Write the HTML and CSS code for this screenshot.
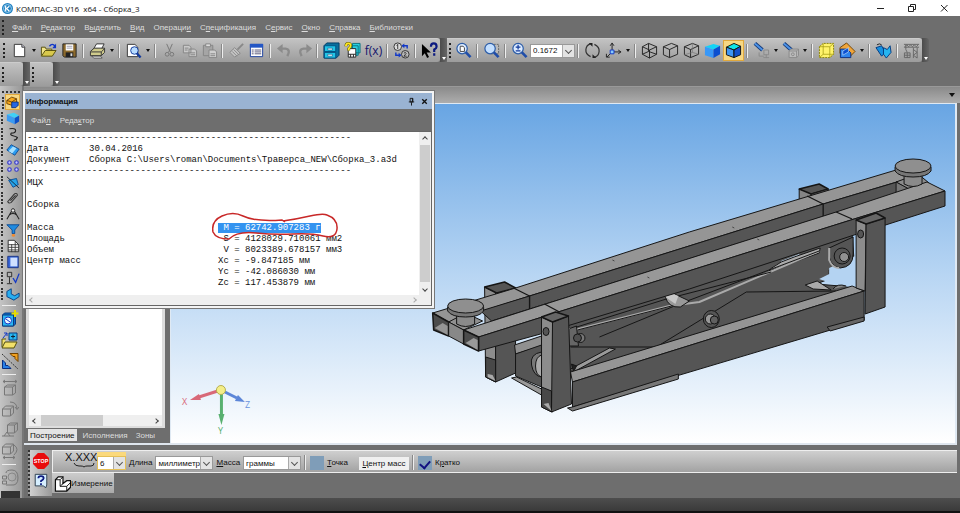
FILE: index.html
```html
<!DOCTYPE html>
<html lang="ru">
<head>
    <meta charset="UTF-8">
    <meta name="viewport" content="width=device-width, initial-scale=1.0">
    <title>КОМПАС-3D V16 x64 - Сборка_3</title>
    <link rel="stylesheet" href="styles.css">
</head>
<body>

<header class="titlebar">
    <svg class="logo" viewBox="0 0 12 12"><circle cx="6" cy="6" r="6" fill="#1f7fc0"/><circle cx="6" cy="6" r="4.3" fill="none" stroke="#9fd2f2"/><path d="M4 3v6M8 3.500L5 6l3 3" stroke="#fff" stroke-width="1.300" fill="none"/></svg>
    <h1>КОМПАС-3D V16 &nbsp;x64 - Сборка_3</h1>
    <div class="window-buttons">
        <button type="button" aria-label="Свернуть"><svg viewBox="0 0 10 10"><path d="M2 5.500h7" stroke="#222"/></svg></button>
        <button type="button" aria-label="Развернуть"><svg viewBox="0 0 10 10"><path d="M1.500 3.500h5v5h-5zM3.500 3V1.500h5v5H7" stroke="#222" fill="none"/></svg></button>
        <button type="button" aria-label="Закрыть"><svg viewBox="0 0 10 10"><path d="M2 2l6.500 6.500M8.500 2L2 8.500" stroke="#222"/></svg></button>
    </div>
</header>

<nav class="menubar">
    <span class="grip"></span>
    <a href="#"><u>Ф</u>айл</a>
    <a href="#"><u>Р</u>едактор</a>
    <a href="#">В<u>ы</u>делить</a>
    <a href="#"><u>В</u>ид</a>
    <a href="#">Операци<u>и</u></a>
    <a href="#">С<u>п</u>ецификация</a>
    <a href="#">С<u>е</u>рвис</a>
    <a href="#"><u>О</u>кно</a>
    <a href="#"><u>С</u>правка</a>
    <a href="#"><u>Б</u>иблиотеки</a>
</nav>

<div class="toolbars">
    <div class="toolbar first">
        <span class="grip"></span>
        <button type="button" aria-label="Создать"><svg viewBox="0 0 18 18"><path d="M3.500 2.500h8l3 3v10h-11z" fill="#fff" stroke="#333"/><path d="M11.500 2.500v3h3" fill="#ccd" stroke="#333"/></svg></button>
        <button type="button" class="drop" aria-label="Список"></button>
        <button type="button" aria-label="Открыть"><svg viewBox="0 0 18 18"><path d="M1.500 14.500v-9h4l1 2h6v2" fill="#f3e58a" stroke="#55500f"/><path d="M1.500 15l4-6H17l-4 6z" fill="#d9c94c" stroke="#55500f"/><path d="M10 4.500q3-4 6 0" fill="none" stroke="#1238c8" stroke-width="1.500"/><path d="M17 1.500v5h-4z" fill="#1238c8"/></svg></button>
        <button type="button" aria-label="Сохранить"><svg viewBox="0 0 18 18"><path d="M2 2h14v14H3.500L2 14.500z" fill="#8c6a2c" stroke="#222"/><path d="M5 2.500h8V9H5z" fill="#fff"/><path d="M5 11h8v5H5z" fill="#222"/><path d="M10 12h2v3h-2z" fill="#ddd"/><path d="M6 4.500h6M6 6.500h6" stroke="#99a"/></svg></button>
        <span class="sep"></span>
        <button type="button" aria-label="Печать"><svg viewBox="0 0 18 18"><path d="M5 7l3-5h8l-3 6z" fill="#fff" stroke="#333"/><path d="M1.500 10l4-3.500h11V11l-3.500 3.500H1.500z" fill="#cfcb8c" stroke="#333"/><path d="M2 10.500h11L16.500 7M13 10.500v4" fill="none" stroke="#333"/><path d="M3 15h9l2 2H5z" fill="#eee" stroke="#333" stroke-width=".7"/></svg></button>
        <button type="button" class="drop" aria-label="Список"></button>
        <span class="sep"></span>
        <button type="button" aria-label="Предварительный просмотр"><svg viewBox="0 0 18 18"><path d="M2.500 2.500h8l3 3v10h-11z" fill="#fff" stroke="#333"/><circle cx="10" cy="9" r="4" fill="#b8dcff" stroke="#123a9c"/><path d="M12.500 12l4 4.500" stroke="#123a9c" stroke-width="2.500"/></svg></button>
        <button type="button" class="drop" aria-label="Список"></button>
        <span class="sep"></span>
        <button type="button" class="off" aria-label="Вырезать"><svg viewBox="0 0 18 18"><path d="M6 2l4 9M12 2l-4 9" stroke="#777" fill="none"/><circle cx="6.500" cy="13" r="2" fill="none" stroke="#777"/><circle cx="11.500" cy="13" r="2" fill="none" stroke="#777"/></svg></button>
        <button type="button" class="off" aria-label="Копировать"><svg viewBox="0 0 18 18"><path d="M2.500 3.500h6l2 2v6h-8zM8.500 7.500h6l2 2v6h-8z" fill="#c9c9c9" stroke="#858585"/><path d="M4 6.500h4M4 8.500h3M10 11.500h5M10 13.500h5" stroke="#858585"/></svg></button>
        <button type="button" class="off" aria-label="Вставить"><svg viewBox="0 0 18 18"><path d="M2.500 3.500h10v11h-10z" fill="#a5a5a5" stroke="#858585"/><path d="M5 2h5v3H5z" fill="#ddd" stroke="#858585"/><path d="M8.500 8.500h6l2 2v6h-8z" fill="#cfcfcf" stroke="#858585"/><path d="M10 12.500h5M10 14.500h5" stroke="#858585"/></svg></button>
        <span class="sep"></span>
        <button type="button" class="off" aria-label="Копировать свойства"><svg viewBox="0 0 18 18"><path d="M16 2l-6 6" stroke="#888" stroke-width="2"/><path d="M7 6l6 6-6 4-5-5z" fill="#c4c4c4" stroke="#888"/><path d="M6 8l5 5M4.500 10l5 5" stroke="#888"/></svg></button>
        <button type="button" aria-label="Свойства"><svg viewBox="0 0 18 18"><path d="M2.500 2.500h13v13h-13z" fill="#fff" stroke="#1b3f9d"/><path d="M2 2h14v4H2z" fill="#2457c5"/><path d="M4 8.500h2M4 10.500h2M4 12.500h2M7 8.500h7M7 10.500h7M7 12.500h7" stroke="#557"/></svg></button>
        <span class="sep"></span>
        <button type="button" class="off" aria-label="Отменить"><svg viewBox="0 0 18 18"><path d="M5 7h5q6 1 2 8" fill="none" stroke="#8b8b8b" stroke-width="2.500"/><path d="M1 7l6-5v10z" fill="#8b8b8b"/></svg></button>
        <button type="button" class="off" aria-label="Повторить"><svg viewBox="0 0 18 18"><path d="M13 7H8q-6 1-2 8" fill="none" stroke="#8b8b8b" stroke-width="2.500"/><path d="M17 7l-6-5v10z" fill="#8b8b8b"/></svg></button>
        <span class="sep"></span>
        <button type="button" aria-label="Менеджер библиотек"><svg viewBox="0 0 18 18"><path d="M1 4l3-3h13v13l-3 3H1z" fill="#0a6f9d" stroke="#033c66"/><path d="M1.500 4h12v6h-12zM1.500 11h12v6h-12z" fill="#20c6e8" stroke="#044f80"/><path d="M5 6.500h5v2H5zM5 13h5v2H5z" fill="#fff" stroke="#044f80" stroke-width=".6"/></svg></button>
        <button type="button" aria-label="Показать структуру"><svg viewBox="0 0 18 18"><path d="M9 1.500h8v10H9zM7 4h8v10H7z" fill="#2ad0e0" stroke="#08727f"/><path d="M4.500 7h8v9h-8z" fill="#fff" stroke="#222"/><path d="M4.500 13h8M7 13v3M10 13v3" stroke="#222"/><path d="M2 4.500q0-3 2.500-3T7 4q0 1.500-2 3v2" fill="none" stroke="#5a5200" stroke-width="3"/><path d="M2 4.500q0-3 2.500-3T7 4q0 1.500-2 3v2" fill="none" stroke="#ffe820" stroke-width="2"/></svg></button>
        <button type="button" class="fx" aria-label="Переменные">f(x)</button>
        <span class="sep"></span>
        <button type="button" aria-label="Перенумеровать"><svg viewBox="0 0 18 18"><circle cx="5" cy="5" r="4" fill="#ddd" stroke="#333"/><circle cx="13" cy="13" r="4" fill="#bbb" stroke="#333"/><path d="M4 4l1-1.500v5M11.500 12q1.500-2 2.500 0l-2.500 3h3" fill="none" stroke="#222" stroke-width=".9"/><path d="M10 4h5v3M3 11v3h4" stroke="#1238c8" stroke-width="1.500" fill="none"/><path d="M12 1.500v5L9 4zM6 11.500v5l3-2.500z" fill="#1238c8"/></svg></button>
        <span class="sep"></span>
        <button type="button" aria-label="Что это такое?"><svg viewBox="0 0 18 18"><path d="M1 2v13l3-3 2.500 5 2-1L6 11h4.500z" fill="#000"/><path d="M10.500 5q0-3.500 3-3.500T16.500 5q0 1.500-2.500 3v2.500M14 12v2.500" fill="none" stroke="#0c1a80" stroke-width="2.300"/></svg></button>
    </div>
    <button type="button" class="overflow" aria-label="Параметры панели"></button>
    <div class="toolbar">
        <span class="grip"></span>
        <button type="button" aria-label="Показать все"><svg viewBox="0 0 18 18"><circle cx="7.500" cy="7" r="5.500" fill="#dcebff" stroke="#2c5da8" stroke-width="1.300"/><path d="M5.500 4.500h3l1.500 1.500v4H5.500z" fill="#fff" stroke="#333" stroke-width=".9"/><path d="M11.500 11l5 5" stroke="#1f4da8" stroke-width="2.800"/></svg></button>
        <span class="sep"></span>
        <button type="button" aria-label="Увеличить рамкой"><svg viewBox="0 0 18 18"><path d="M8.500 2.500h8v10h-8z" fill="#bbb" stroke="#666" stroke-dasharray="2 1"/><circle cx="7.500" cy="7" r="5.500" fill="#c3dfff" stroke="#2c5da8" stroke-width="1.300"/><path d="M11.500 11l5 5" stroke="#1f4da8" stroke-width="2.800"/></svg></button>
        <span class="sep"></span>
        <button type="button" aria-label="Приблизить"><svg viewBox="0 0 18 18"><circle cx="7.500" cy="7" r="5.500" fill="#dcebff" stroke="#2c5da8" stroke-width="1.300"/><path d="M7.500 3v5M5 5.500h5M5 9.500h5" stroke="#123a9c" stroke-width="1.300"/><path d="M11.500 11l5 5" stroke="#1f4da8" stroke-width="2.800"/></svg></button>
        <span class="combo scale"><select aria-label="Масштаб"><option>0.1672</option></select></span>
        <span class="sep"></span>
        <button type="button" aria-label="Повернуть"><svg viewBox="0 0 18 18"><path d="M7 15.500Q1.500 13 2 8t5-6M11 2.500q5.500 2.500 5 7.500t-5 6" fill="none" stroke="#333" stroke-width="1.300"/><path d="M5 1h4v4zM13 17H9v-4z" fill="#222"/></svg></button>
        <button type="button" aria-label="Ориентация"><svg viewBox="0 0 18 18"><path d="M7.500 10V2M7.500 10.500H16M7 11l-5 5" stroke="#222" fill="none"/><path d="M5.500 4l2-3 2 3M14 8.500l3 2-3 2M1.500 12.500V16H5" fill="none" stroke="#222"/><path d="M5.500 8.500h4v4h-4z" fill="#8cf" stroke="#1238c8"/></svg></button>
        <button type="button" class="drop" aria-label="Список"></button>
        <span class="sep"></span>
        <button type="button" aria-label="Каркас"><svg viewBox="0 0 18 18"><path d="M1.500 5L8 1.500 16.500 5v8L9 17l-7.500-4zM1.500 5L9 8.500 16.500 5M9 8.500V17M8 1.500V10l-6.500 3M8 10l8.500 3" fill="none" stroke="#222"/></svg></button>
        <button type="button" aria-label="Без невидимых линий"><svg viewBox="0 0 18 18"><path d="M1.500 5L10 1.500 16.500 4v9L8 16.500l-6.500-3zM1.500 5L8 8l8.500-4M8 8v8.500" fill="none" stroke="#222"/></svg></button>
        <button type="button" aria-label="Тонкие невидимые линии"><svg viewBox="0 0 18 18"><path d="M1.500 5L10 1.500 16.500 4v9L8 16.500l-6.500-3zM1.500 5L8 8l8.500-4M8 8v8.500" fill="none" stroke="#222"/><path d="M10 1.500V11l-8.500 2.500M10 11l6.500 2" fill="none" stroke="#777" stroke-width=".7"/></svg></button>
        <button type="button" aria-label="Полутоновое"><svg viewBox="0 0 18 18"><path d="M1 5l9-3 7 2-7 4z" fill="#12d4f6"/><path d="M1 5l9 3v9l-9-3z" fill="#3898f8"/><path d="M10 8l7-4v9l-7 4z" fill="#0b4fd0"/></svg></button>
        <button type="button" class="active" aria-label="Полутоновое с каркасом"><svg viewBox="0 0 18 18"><path d="M1.500 5.500l8-4 7 3-7 4z" fill="#12e4e6" stroke="#111"/><path d="M1.500 5.500l8 3v8l-8-3z" fill="#3f96f4" stroke="#111"/><path d="M9.500 8.500l7-4v9l-7 3z" fill="#1450c8" stroke="#111"/></svg></button>
        <span class="sep"></span>
        <button type="button" aria-label="Скрыть"><svg viewBox="0 0 18 18"><path d="M2 1.500l8 7" stroke="#163a78" stroke-width="4"/><path d="M2 1.500l8 7" stroke="#4d93e8" stroke-width="2"/><path d="M6.500 11v4h5M11.500 8.500h5v5h-5zM14 13.500V17M11 16.500h6" fill="none" stroke="#8a8a8a"/></svg></button>
        <button type="button" class="drop" aria-label="Список"></button>
        <button type="button" aria-label="Упрощения"><svg viewBox="0 0 18 18"><path d="M2 1.500l8 7" stroke="#163a78" stroke-width="4"/><path d="M2 1.500l8 7" stroke="#4d93e8" stroke-width="2"/><path d="M7.500 9.500l2-2h8v7l-2 2h-8zM7.500 9.500h8v7M15.500 9.500l2-2" fill="#bbb" stroke="#8a8a8a"/><circle cx="11.500" cy="13" r="1.500" fill="none" stroke="#8a8a8a"/></svg></button>
        <button type="button" class="drop" aria-label="Список"></button>
        <span class="sep"></span>
        <button type="button" aria-label="Упрощенное отображение"><svg viewBox="0 0 18 18"><path d="M1.500 5l4-3.500h11V13l-4 3.500h-11z" fill="#fff36a" stroke="#8a8200" stroke-dasharray="2 1"/><path d="M1.500 5h11v11.500M12.500 5l4-3.500M5.500 1.500V13h11M5.500 13l-4 3.500" fill="none" stroke="#a39a10" stroke-width=".8"/></svg></button>
        <button type="button" aria-label="Перестроить"><svg viewBox="0 0 18 18"><path d="M1 6l7-5 9 9-5 5-11-3z" fill="#f0a53a" stroke="#714200"/><path d="M1.500 7.500h7l4 4v5h-11z" fill="#2f83ec" stroke="#0b2f80"/><path d="M4 14V9.500L10 6v4.500z" fill="#0b4fd0" stroke="#bdf" stroke-width=".7"/></svg></button>
        <button type="button" class="drop" aria-label="Список"></button>
        <span class="sep"></span>
        <button type="button" aria-label="Сечение"><svg viewBox="0 0 18 18"><path d="M1 6l6-2 4 7-4 4z" fill="#1590e0" stroke="#063a80"/><path d="M9 6l4 2 3-4 1 7-5 6-3-4z" fill="#26b5f0" stroke="#063a80"/><path d="M2 3q3-2 5 0" stroke="#222" fill="none"/></svg></button>
        <span class="sep"></span>
        <button type="button" aria-label="Механика"><svg viewBox="0 0 18 18"><path d="M1 2.500h16M1 5.500h16M3 3v5M11 6v11M15 6v11M11 8l4 3-4 3 4 3M1.500 11.500h6v5h-6zM4.500 11.500v5M1.500 14h6M3 8l1.500 3M2 5l2-2 2 2 2-2 2 2 2-2 2 2 2-2" fill="none" stroke="#666"/></svg></button>
    </div>
    <button type="button" class="overflow" aria-label="Параметры панели"></button>
</div>

<div class="toolbars stubs">
    <div class="stub"><span class="grip"></span></div>
    <button type="button" class="overflow" aria-label="Параметры панели"></button>
    <div class="stub"><span class="grip"></span></div>
    <button type="button" class="overflow" aria-label="Параметры панели"></button>
</div>

<main class="workspace">
    <aside class="compact">
        <span class="top-grip"></span>
        <button type="button" class="active" aria-label="Редактирование сборки"><svg viewBox="0 0 16 16"><path d="M1 6l6-4 6 2v5l-6 3-6-2z" fill="#f7a81c" stroke="#5c3500"/><path d="M7 8h8v4l-3 3H7z" fill="#2767e0" stroke="#082a70"/><path d="M1 6l6 2 6-4" fill="none" stroke="#5c3500"/></svg></button>
        <button type="button" aria-label="Вспомогательная геометрия"><svg viewBox="0 0 16 16"><path d="M1 4l8-2 6 3-5 3z" fill="#3fd0f6"/><path d="M1 4l9 4v7l-9-4z" fill="#3a9bf2"/><path d="M10 8l5-3v7l-5 3z" fill="#0b50c8"/></svg></button>
        <button type="button" aria-label="Пространственные кривые"><svg viewBox="0 0 16 16"><path d="M4 2q7-1 7 2t-5 3q-2 2 2 3t5 2q-1 3-4 3" fill="none" stroke="#222" stroke-width="1.300"/></svg></button>
        <button type="button" aria-label="Поверхности"><svg viewBox="0 0 16 16"><path d="M1 8l5-6 9 5-5 7z" fill="#2a9cf0" stroke="#0a4790"/><path d="M3 9l5-5 4 2-5 6z" fill="#a6e0ff"/></svg></button>
        <button type="button" aria-label="Массивы"><svg viewBox="0 0 16 16"><g fill="#c7c9ff" stroke="#3338c8" stroke-width="1.300"><circle cx="4" cy="4" r="2"/><circle cx="12" cy="4" r="2"/><circle cx="4" cy="12" r="2"/><circle cx="12" cy="12" r="2"/></g></svg></button>
        <button type="button" aria-label="Вспомогательные элементы"><svg viewBox="0 0 16 16"><path d="M3 6l9-2 2 7-6 3z" fill="#25a4ea" stroke="#0a4790"/><path d="M1 2l14 13" stroke="#123"/></svg></button>
        <button type="button" aria-label="Сопряжения"><svg viewBox="0 0 16 16"><path d="M3 11l7-8q3-1 3 2l-7 8q-3 2-4-1l7-8M5 11l6-6" fill="none" stroke="#333" stroke-width="1.200"/></svg></button>
        <button type="button" aria-label="Измерения"><svg viewBox="0 0 16 16"><path d="M8 2L1 14M8 2l7 12M4 9q4-3 8 0" fill="none" stroke="#222" stroke-width="1.200"/><circle cx="8" cy="4" r="2" fill="#eee" stroke="#222"/></svg></button>
        <button type="button" aria-label="Фильтры"><svg viewBox="0 0 16 16"><path d="M1 2h14l-5 6v4H7V8z" fill="#1f8be0" stroke="#0a4790"/><circle cx="8.500" cy="14" r="1.800" fill="#f08a30"/></svg></button>
        <button type="button" aria-label="Спецификация"><svg viewBox="0 0 16 16"><path d="M2.500 1.500h7l5 5v8h-12z" fill="#fff" stroke="#222"/><path d="M2.500 6.500h12M2.500 9.500h12M2.500 12.500h12M6.500 6v9M10.500 2v13" stroke="#333" fill="none"/></svg></button>
        <button type="button" aria-label="Отчеты"><svg viewBox="0 0 16 16"><path d="M2 1.500h12v13H2z" fill="#3866d8" stroke="#162f80"/><path d="M5 3h8v10H5z" fill="#cfe0ff"/></svg></button>
        <button type="button" aria-label="Элементы оформления"><svg viewBox="0 0 16 16"><path d="M1.500 1.500h5v5h-5zM4 7v7M1 14.500h6" fill="none" stroke="#222"/><path d="M8 8l3 5 4-10" fill="none" stroke="#1238c8" stroke-width="1.500"/></svg></button>
        <button type="button" aria-label="Листовое тело"><svg viewBox="0 0 16 16"><path d="M1 5l5-3v6l4 2 5-3v4l-6 4-8-4z" fill="#28aef0" stroke="#083c80"/></svg></button>
        <hr>
        <button type="button" class="big" aria-label="Добавить из файла"><svg viewBox="0 0 18 18"><path d="M1.500 5l2-2h11v11l-2 2h-11z" fill="#0b6fd0" stroke="#083c80"/><path d="M1.500 5h11v11h-11z" fill="#28b6f2" stroke="#083c80"/><circle cx="7" cy="10.500" r="3.500" fill="#eaf6ff" stroke="#1238c8"/><path d="M5 9l4 3" stroke="#1238c8"/><path d="M14 0v7M10.500 3.500h7" stroke="#e8dd00" stroke-width="2"/></svg></button>
        <button type="button" class="big" aria-label="Открыть компонент"><svg viewBox="0 0 18 18"><path d="M8 2h8v7H8z" fill="#28b6f2" stroke="#083c80"/><path d="M12 3.500v4M10 5.500h4" stroke="#123"/><path d="M1 17l3-6h12l-3 6zM1 16V8h4" fill="#f2e06a" stroke="#55500f"/><path d="M2 7l4-5M6 5V2H3" stroke="#1238c8" fill="none"/></svg></button>
        <button type="button" class="big" aria-label="Зеркальное отражение"><svg viewBox="0 0 18 18"><path d="M1 2l16 15" stroke="#333" stroke-dasharray="2 1"/><path d="M9 1.500h8v8l-3-3v-2h-2z" fill="#f0a020" stroke="#714200"/><path d="M1.500 8v8.500H10l-3-3H4.500V11z" fill="#2880e8" stroke="#0b2f80"/></svg></button>
        <hr>
        <button type="button" class="big" aria-label="Переместить компонент"><svg viewBox="0 0 18 18"><path d="M2 2.500h14M4 1L2 2.500 4 4M14 1l2 1.500L14 4M3.500 8l3-2h8v8l-3 2h-8zM3.500 8h8v8M11.500 8l3-2" fill="none" stroke="#777"/></svg></button>
        <button type="button" class="big" aria-label="Повернуть компонент"><svg viewBox="0 0 18 18"><path d="M1.500 9l3-3h8v7l-3 3h-8zM1.500 9h8v7M9.500 9l3-3M9 2q7 0 7 7M14 7l2 2.500L18 7" fill="none" stroke="#777"/></svg></button>
        <button type="button" class="big" aria-label="Разместить компонент"><svg viewBox="0 0 18 18"><path d="M6.500 4l3-2h7v7l-3 3h-7zM6.500 4h7v8M13.500 4l3-2M1 15h12M3 15l3-4 3 4" fill="none" stroke="#777"/></svg></button>
        <button type="button" class="big" aria-label="Вращение"><svg viewBox="0 0 18 18"><path d="M1.500 5l3-3h8v7l-3 3h-8zM1.500 5h8v7M9.500 5l3-3M13 3q6 4 0 10M2 15.500h12M4 14l-2 1.500L4 17M12 14l2 1.500-2 1.500" fill="none" stroke="#777"/></svg></button>
        <hr>
        <button type="button" class="big" aria-label="Создать объект"><svg viewBox="0 0 18 18"><path d="M1.500 7h4v3h-4zM1.500 12h4v3h-4zM5 4q0-3 6-3t6 8-7 7H5" fill="none" stroke="#777"/><circle cx="11" cy="8" r="4" fill="none" stroke="#888"/></svg></button>
        <span class="bottom-corner"></span>
    </aside>

    <div class="content">
        <div class="tabstrip"><button type="button" class="drop" aria-label="Список окон"></button></div>
        <div class="panes">
            <section class="tree">
                <div class="tree-list">
                    <div class="hscroll"><span class="chev left"></span><span class="thumb"></span><span class="chev right"></span></div>
                </div>
                <div class="tabs">
                    <button type="button" class="current">Построение</button>
                    <button type="button">Исполнения</button>
                    <button type="button">Зоны</button>
                </div>
            </section>
            <section class="view">
                <svg viewBox="171 104 785 339" preserveAspectRatio="none">
                    <g stroke="#151515" stroke-width="1" stroke-linejoin="round">
                        <!-- rear posts -->
                        <path d="M485 287l11 5v90l-10-5z" fill="#8c8c8c"/>
                        <path d="M496 292l20-4v85l-20 9z" fill="#555"/>
                        <path d="M485 287l20-5 11 6-19 5z" fill="#555" stroke-width="1.500"/>
                        <path d="M486 357l10 3v22l-10-5z" fill="#484848"/>
                        <path d="M488 374l5 1 3 6-8-4z" fill="#aaa" stroke="none"/>
                        <path d="M800 189l12 4v8l-12-1z" fill="#858585"/>
                        <path d="M800 189l20-5 9 5-17 5z" fill="#555" stroke-width="1.500"/>
                        <path d="M812 194l17-5v8l-17 4z" fill="#555"/>
                        <!-- rear beam -->
                        <path d="M433 313l83-25 174-56 207-62 14 8-87 26-294 92-81 26z" fill="#959595"/>
                        <path d="M530 296l294-92 74-22 1 14-64 17-289 91-16 5z" fill="#555"/>
                        <path d="M481 311l49-15v13l-38 12z" fill="#555"/>
                        <path d="M433 313l16 9v14l-15-6z" fill="#4b4b4b" stroke-width="1.500"/>
                        <path d="M435 328l8-5 5 3v9z" fill="#959595" stroke="none"/>
                        <path d="M449 322l17-9 17 8-19 9z" fill="#909090"/>
                        <path d="M449 322l15 8v14l-15-8z" fill="#888"/>
                        <path d="M514 288l16 8v13M808 196l16 8v12" fill="none" stroke-width="1.300"/>
                        <path d="M897 182l22-8 11 9-19 7z" fill="#8b8b8b"/>
                        <path d="M897 182l13 7-13 4z" fill="#777"/>
                        <!-- lower rear beam -->
                        <path d="M515 345l27-9v10l-26 8z" fill="#909090"/>
                        <path d="M516 354l26-9v42l-26-11z" fill="#555"/>
                        <path d="M512 378l5-1 25 12v6z" fill="#999"/>
                        <path d="M542 352q-12 2-10 13t10 12" fill="#777"/>
                        <path d="M542 355q-6 2-6 11t6 11" fill="#aaa"/>
                        <!-- levers and web -->
                        <path d="M569 323l284-88 2 26-25 9v9l-13 5 36 3-283 87z" fill="#555"/>
                        <path d="M820 279l10-5v-6l26-12 1 32-20-3z" fill="#b4d3f2" stroke="none"/>
                        <path d="M782 261l18-7 1 4-20 6z" fill="#bfdaf4" stroke="none"/>
                        <path d="M771 269q10-8 24-12l26-9-1 5-50 18z" fill="#aaa"/>
                        <path d="M575 330l95-24 30-4 120-51" fill="none" stroke="#aaa" stroke-width="2"/>
                        <path d="M574 328l93-29 105-27M578 330l102-26 140-53M571 347h86l90-55 90-1M600 337l80-33" fill="none"/>
                        <path d="M666 297l5-5 19 9-9 6q-12 1-15-10z" fill="#999"/>
                        <path d="M666 297q2-5 6-4l7 3-3 8z" fill="#c7c7c7" stroke="none"/>
                        <path d="M571 369l39-21 6 1-42 23z" fill="#9a9a9a"/>
                        <path d="M572 364l5 2-3 6z" fill="#222"/>
                        <path d="M806 285l12-4 14 9-18-1z" fill="#aaa"/>
                        <path d="M834 289q4-6 13-3" fill="#888"/>
                        <path d="M569 329q-7 10 1 17h9l-2-20z" fill="#666"/>
                        <path d="M570 328q-7 9 0 18" fill="none" stroke="#bbb"/>
                        <circle cx="581" cy="338" r="4.500" fill="#777"/>
                        <circle cx="578" cy="338" r="4" fill="#505050"/>
                        <!-- lower front beam -->
                        <path d="M571 372l282-86 12 5-292 91z" fill="#959595"/>
                        <path d="M573 382l292-91v29L573 407z" fill="#555"/>
                        <path d="M568 408l5-1 106-33v5l-106 32z" fill="#777"/>
                        <path d="M828 327l37-10v4l-34 10z" fill="#666"/>
                        <!-- front beam -->
                        <path d="M464 330l82-26 291-92 91-30 18 9-91 28-376 118z" fill="#989898"/>
                        <path d="M479 337l376-118 91-28v15l-91 29-165 54-149 45-62 17z" fill="#555"/>
                        <path d="M464 330l15 7v14l-15-7z" fill="#4b4b4b" stroke-width="1.500"/>
                        <path d="M466 343l8-5 4 2v10z" fill="#999" stroke="none"/>
                        <path d="M545 304l15 8M837 212l16 7" fill="none" stroke-width="1.300"/>
                        <!-- pins -->
                        <path d="M830 248q-2 18 11 20 13-1 13-14v-17z" fill="#555"/>
                        <path d="M830 248v12q3 8 10 8" fill="none" stroke="#aaa" stroke-width="2"/>
                        <circle cx="843" cy="256" r="8" fill="#555"/>
                        <circle cx="845" cy="257" r="4.500" fill="#909090"/>
                        <ellipse cx="712" cy="319" rx="8" ry="8.500" fill="#555"/>
                        <circle cx="711" cy="319" r="5" fill="#999"/>
                        <circle cx="715" cy="320" r="4" fill="#606060"/>
                        <path d="M613 260l2 1M648 277l2 1M733 227l2 1M758 239l2 1" stroke="#444"/>
                        <!-- front posts -->
                        <path d="M542 317l11 5v90l-11-5z" fill="#8c8c8c"/>
                        <path d="M553 322l16-6 3 88-20 8z" fill="#555"/>
                        <path d="M542 317l14-5 13 4-16 6z" fill="#666" stroke-width="1.500"/>
                        <ellipse cx="546.500" cy="331.500" rx="3" ry="4" fill="#555"/>
                        <path d="M542 387l10 4v21l-10-5z" fill="#484848"/>
                        <path d="M544 404l5-1 3 8z" fill="#aaa" stroke="none"/>
                        <path d="M857 220l10 4-1 67-9-3z" fill="#8c8c8c"/>
                        <path d="M867 224l19-6v89l-20 7z" fill="#555"/>
                        <path d="M857 220l20-7 9 5-19 6z" fill="#666" stroke-width="1.500"/>
                        <ellipse cx="861.500" cy="234" rx="3" ry="4" fill="#555"/>
                        <!-- support pads -->
                        <path d="M457 312v12q9 5 18 0v-12z" fill="#8a8a8a"/>
                        <path d="M448 307v4q4 6 18 6t18-6v-4z" fill="#777"/>
                        <ellipse cx="466" cy="306" rx="18" ry="7" fill="#8f8f8f"/>
                        <path d="M905 173v11q9 5 18 0v-11z" fill="#8a8a8a"/>
                        <path d="M896 167v4q4 6 18 6t18-6v-4z" fill="#777"/>
                        <ellipse cx="914" cy="166" rx="18" ry="7" fill="#8f8f8f"/>
                    </g>
                    <!-- axes -->
                    <path d="M221 390l-22 7" stroke="#d86878" stroke-width="3"/>
                    <path d="M190 400l9-6 2 6z" fill="#d86878"/>
                    <path d="M221 390l16 8" stroke="#5c86d8" stroke-width="3"/>
                    <path d="M245 402l-10-1 3-6z" fill="#5c86d8"/>
                    <path d="M221.500 390v26" stroke="#58b070" stroke-width="3"/>
                    <path d="M221.500 425l-3-11h6z" fill="#58b070"/>
                    <circle cx="221" cy="390" r="4.500" fill="#f4ee88" stroke="#b5ae50"/>
                    <text x="182" y="405" class="axis" fill="#d86878">X</text>
                    <text x="245" y="408" class="axis" fill="#6a94dd">Z</text>
                    <text x="218" y="434" class="axis" fill="#58b070">Y</text>
                </svg>
            </section>
        </div>

        <section class="props">
            <div class="props-side">
                <button type="button" class="stop" aria-label="Прервать команду"><svg viewBox="0 0 18 18"><path d="M5.500 0h7L18 5.500v7L12.500 18h-7L0 12.500v-7z" fill="#e80c0c"/><text x="9" y="11" text-anchor="middle" class="stop-text">STOP</text></svg></button>
                <button type="button" aria-label="Справка"><svg viewBox="0 0 18 18"><path d="M2.500 1.500h13v12l-1 3-3-2h-9z" fill="#d6efff" stroke="#234"/><path d="M6 6q0-2.500 3-2.500T12 6q0 1.500-3 3v1M9 11.500v2" fill="none" stroke="#0c1a80" stroke-width="2"/></svg></button>
            </div>
            <div class="props-main">
                <div class="props-row">
                    <span class="digits"><span>X.XXX</span><svg viewBox="0 0 24 5"><path d="M2 0q1 3 5 3h2q2 0 3 1 1-1 3-1h4q3 0 3-3" fill="none" stroke="#222"/></svg></span>
                    <span class="combo precision"><select aria-label="Точность"><option>6</option></select></span>
                    <label for="length"><u>Д</u>лина</label>
                    <span class="combo length"><select id="length"><option>миллиметры</option></select></span>
                    <label for="mass"><u>М</u>асса</label>
                    <span class="combo mass"><select id="mass"><option>граммы</option></select></span>
                    <span class="sep"></span>
                    <input type="checkbox" id="point"><label for="point"><u>Т</u>очка</label>
                    <button type="button" class="center-mass"><u>Ц</u>ентр масс</button>
                    <span class="sep"></span>
                    <input type="checkbox" id="brief" checked><label for="brief">К<u>р</u>атко</label>
                </div>
                <button type="button" class="measure"><svg viewBox="0 0 18 18"><path d="M1.500 5l3-3h5v7l4-3h4v7l-4 4h-12z" fill="#fff" stroke="#111" stroke-width="1.300"/><path d="M1.500 5h5v7h7v5M6.500 5l3-3M13.500 12l4-4M6.500 12l3-3" fill="none" stroke="#111"/></svg>Измерение</button>
            </div>
        </section>
    </div>

    <section class="dialog">
        <header>
            <h2>Информация</h2>
            <button type="button" aria-label="Закрепить"><svg viewBox="0 0 10 10"><path d="M3.500 1.500h3v4h-3zM2 5.500h6M5 6v3.500M6 1.500v4" fill="none" stroke="#111"/></svg></button>
            <button type="button" aria-label="Закрыть"><svg viewBox="0 0 10 10"><path d="M2.500 2.500l5 5M7.500 2.500l-5 5" stroke="#111" stroke-width="1.500"/></svg></button>
        </header>
        <nav><a href="#">Фай<u>л</u></a><a href="#">Реда<u>к</u>тор</a></nav>
        <div class="report-wrap">
            <div class="report">
                <div class="rule">------------------------------------------------------------</div>
                <div class="line"><span>Дата</span><span>30.04.2016</span></div>
                <div class="line"><span>Документ</span><span>Сборка C:\Users\roman\Documents\Траверса_NEW\Сборка_3.a3d</span></div>
                <div class="rule">------------------------------------------------------------</div>
                <div class="block">МЦХ</div>
                <div class="block">Сборка</div>
                <div class="values">
                    <span>Масса</span><span><mark> M = 62742.907283 г</mark></span>
                    <span>Площадь</span><span> S = 4128029.710061 мм2</span>
                    <span>Объем</span><span> V = 8023389.678157 мм3</span>
                    <span>Центр масс</span><span>Xc = -9.847185 мм</span>
                    <span></span><span>Yc = -42.086030 мм</span>
                    <span></span><span>Zc = 117.453879 мм</span>
                </div>
                <svg class="pen" viewBox="0 0 130 30"><path d="M71 9Q85 7 98 4t17-1q11 4 10 14t-14 7q-12-3-30-2T44 21 17 27Q4 27 1 20-1 9 10 4T31 4Q43 10 70 8l3 2" fill="none" stroke="#c82828" stroke-width="1.500"/></svg>
            </div>
            <div class="vscroll"><span class="chev up"></span><span class="thumb"></span><span class="chev down"></span></div>
        </div>
        <div class="hscroll"><span class="chev left"></span><span class="chev right"></span></div>
    </section>
</main>

<footer class="taskbar"></footer>

</body>
</html>
```

FILE: styles.css
```css
* {
    box-sizing: border-box;
}
body {
    margin: 0;
    height: 100vh;
    min-height: 500px;
    display: flex;
    flex-direction: column;
    background: #6e6e6e;
    font-family: "Liberation Sans", Arial, sans-serif;
    font-size: 8px;
    color: #111;
    overflow: hidden;
}
button, select, input {
    font: inherit;
    color: inherit;
    margin: 0;
}
button {
    padding: 0;
    border: none;
    background: none;
    display: flex;
    align-items: center;
    justify-content: center;
}
a {
    color: inherit;
    text-decoration: none;
}
svg {
    display: block;
}
.titlebar {
    flex: none;
    height: 16px;
    background: #fff;
    display: flex;
    align-items: center;
    padding-left: 2px;
}
.logo {
    width: 11px;
    height: 11px;
    margin-right: 3px;
}
.titlebar h1 {
    margin: 0;
    font: 8px "Open Sans", sans-serif;
}
.window-buttons {
    margin-left: auto;
    display: flex;
}
.window-buttons button {
    width: 32px;
    height: 14px;
}
.window-buttons svg {
    width: 10px;
    height: 10px;
}
.grip {
    flex: none;
    width: 6px;
    height: 15px;
    border-left: 2px dotted #222;
    margin-left: 2px;
    margin-right: -2px;
}
.menubar {
    flex: none;
    height: 22px;
    display: flex;
    align-items: center;
    gap: 9px;
    color: #ddd;
}
.menubar .grip {
    margin-right: -5px;
}
.toolbars {
    flex: none;
    height: 24px;
    display: flex;
}
.toolbar, .stub {
    display: flex;
    align-items: center;
    background: linear-gradient(#c2c2c2, #9c9c9c);
    border-top: 1px solid #ccc;
    border-radius: 0 3px 3px 0;
}
.toolbar.first {
    padding-left: 3px;
}
.first .grip {
    margin-left: 0;
    margin-right: 0;
}
.toolbar button {
    width: 21px;
    height: 21px;
}
.toolbar button.off {
    width: 20px;
}
.toolbar svg {
    width: 17px;
    height: 17px;
}
.toolbar button.active, .compact button.active {
    background: #f7d884;
    border: 1px solid #e0a83c;
}
.toolbar button.fx {
    font: 12px "Open Sans", sans-serif;
    color: #15156c;
}
.toolbar button.drop {
    width: 8px;
}
.drop::after {
    content: "";
    border: 2px solid transparent;
    border-top: 3px solid #111;
    border-bottom: none;
}
.sep {
    flex: none;
    width: 1px;
    height: 14px;
    margin: 0 3px;
    background: #eee;
    box-shadow: -1px 0 #888;
}
.overflow {
    width: 7px;
    background: linear-gradient(to right, #4c4c4c, #666);
    border-radius: 0 3px 3px 0;
    align-items: flex-end;
    padding-bottom: 2px;
}
.overflow::after {
    content: "";
    border: 2px solid transparent;
    border-top: 3px solid #fff;
    border-bottom: none;
}
.stub {
    width: 23px;
}
.combo {
    position: relative;
    display: block;
    background: #fff;
    border: 1px solid #999;
    height: 14px;
}
.combo select {
    appearance: none;
    width: 100%;
    height: 100%;
    padding: 0 11px 0 2px;
    border: none;
    background: none;
    display: block;
}
.combo::before {
    content: "";
    position: absolute;
    right: 0;
    top: 0;
    bottom: 0;
    width: 11px;
    background: #e3e3e3;
    border-left: 1px solid #aaa;
    pointer-events: none;
}
.combo::after {
    content: "";
    position: absolute;
    right: 3px;
    top: 3px;
    width: 4px;
    height: 4px;
    border: solid #555;
    border-width: 0 1px 1px 0;
    transform: rotate(45deg);
    pointer-events: none;
}
.scale {
    width: 45px;
}
.workspace {
    position: relative;
    flex: 1;
    min-height: 0;
    display: flex;
}
.compact {
    flex: none;
    width: 24px;
    padding: 0 2px 0 1px;
    background: linear-gradient(to right, #c4c4c4, #999);
    border-right: 2px solid #777;
    display: flex;
    flex-direction: column;
    align-items: flex-end;
}
.top-grip {
    width: 18px;
    height: 7px;
    border-bottom: 2px dotted #333;
    margin-bottom: 1px;
}
.compact button {
    flex: none;
    position: relative;
    width: 15px;
    height: 16px;
}
.compact button::before {
    content: "";
    position: absolute;
    left: -4px;
    top: 2px;
    height: 12px;
    border-left: 2px dotted #333;
}
.compact button svg {
    width: 14px;
    height: 14px;
}
.compact button.big {
    width: 21px;
    height: 21px;
}
.compact button.big::before {
    display: none;
}
.compact button.big svg {
    width: 18px;
    height: 18px;
}
.compact hr {
    width: 14px;
    height: 1px;
    border: none;
    background: #eee;
    margin: 3px 4px 2px;
}
.bottom-corner {
    margin-top: auto;
    align-self: stretch;
    height: 7px;
    background: #333;
}
.content {
    flex: 1;
    min-width: 0;
    display: flex;
    flex-direction: column;
    padding-right: 3px;
}
.tabstrip {
    flex: none;
    height: 17px;
    margin-right: -3px;
    padding-right: 5px;
    background: linear-gradient(#8a8a8a, #adadad);
    border-top: 1px solid #999;
    display: flex;
    justify-content: flex-end;
}
.tabstrip .drop::after {
    border-width: 3px 3px 0;
    border-top-width: 4px;
}
.panes {
    flex: 1;
    min-height: 0;
    display: flex;
    border-bottom: 2px solid #dfe6ee;
}
.tree {
    flex: none;
    width: 146px;
    padding: 0 5px 0 2px;
    background: #6e6e6e;
    display: flex;
    flex-direction: column;
}
.tree-list {
    flex: 1;
    background: #fff;
    border: 1px solid #ddd;
    border-width: 0 3px 2px 3px;
    display: flex;
    flex-direction: column;
    justify-content: flex-end;
}
.hscroll {
    flex: none;
    height: 11px;
    background: #efefef;
    display: flex;
    align-items: center;
}
.chev {
    flex: none;
    width: 4px;
    height: 4px;
    border: solid #444;
    border-width: 1px 0 0 1px;
    margin: 0 4px;
}
.chev.left {
    transform: rotate(-45deg);
}
.chev.right {
    transform: rotate(135deg);
    margin-left: auto;
}
.chev.up {
    transform: rotate(45deg);
}
.chev.down {
    transform: rotate(225deg);
}
.tree .thumb {
    width: 62px;
    height: 11px;
    background: #cdcdcd;
}
.tabs {
    flex: none;
    display: flex;
    gap: 4px;
    padding: 1px 2px 2px;
    color: #ddd;
}
.tabs button {
    height: 12px;
    padding: 0 2px;
}
.tabs .current {
    background: #e4e4e4;
    color: #111;
}
.view {
    flex: 1;
    min-width: 0;
    background: linear-gradient(#68a5e3, #b7d5f3 50%, #fff);
    border: 1px solid #dfe9f3;
    border-width: 1px 2px 0 1px;
}
.view svg {
    width: 100%;
    height: 100%;
}
.axis {
    font: 9px "Open Sans", sans-serif;
}
.props {
    flex: none;
    height: 53px;
    display: flex;
    padding: 5px 0 2px 4px;
}
.props-side {
    flex: none;
    width: 24px;
    background: linear-gradient(to right, #d0d0d0, #999);
    border-left: 2px dotted #333;
    display: flex;
    flex-direction: column;
    align-items: center;
    gap: 4px;
    padding-top: 3px;
}
.props-side svg {
    width: 16px;
    height: 16px;
}
.stop-text {
    font: bold 6px "Liberation Sans", sans-serif;
    fill: #fff;
}
.props-main {
    flex: 1;
    min-width: 0;
}
.props-row {
    height: 23px;
    display: flex;
    align-items: flex-end;
    padding: 0 0 2px 12px;
    background: linear-gradient(#cfcfcf, #a2a2a2);
    border: 1px solid #eee;
    border-right: none;
}
.props-row label {
    height: 14px;
    line-height: 14px;
    margin: 0 3px;
}
.digits {
    width: 32px;
    height: 18px;
    font-size: 11px;
    line-height: 11px;
}
.digits svg {
    width: 24px;
    height: 5px;
    margin-left: 7px;
}
.precision {
    width: 29px;
    border-color: #e4bf57;
    box-shadow: 0 -4px #fbd97c;
}
.length {
    width: 58px;
}
.mass {
    width: 58px;
}
.props-row .sep {
    height: 15px;
    margin: 0 4px;
}
.props-row input {
    appearance: none;
    width: 14px;
    height: 14px;
    background: #7f9db8;
    display: flex;
    align-items: center;
    justify-content: center;
}
.props-row input:checked::after {
    content: "";
    width: 8px;
    height: 5px;
    border: solid #101080;
    border-width: 0 0 2px 2px;
    transform: rotate(-50deg);
}
.center-mass {
    width: 50px;
    height: 13px;
    margin: 0 0 0 8px;
    background: #f0f0f0;
}
.measure {
    width: 62px;
    height: 20px;
    justify-content: flex-start;
    padding-left: 2px;
    background: linear-gradient(#ccc, #aaa);
}
.measure svg {
    flex: none;
    width: 17px;
    height: 17px;
}
.dialog {
    position: absolute;
    left: 22px;
    top: 4px;
    width: 413px;
    height: 219px;
    padding: 2px;
    background: #f4f4f4;
    border: 1px solid #777;
    display: flex;
    flex-direction: column;
}
.dialog header {
    flex: none;
    height: 16px;
    padding: 0 1px;
    background: #9ab3d2;
    display: flex;
    align-items: center;
}
.dialog h2 {
    margin: 0 auto 0 0;
    font-size: 8px;
}
.dialog header svg {
    width: 9px;
    height: 9px;
    margin: 0 2px;
}
.dialog nav {
    flex: none;
    height: 22px;
    padding-left: 6px;
    background: #6e6e6e;
    color: #ddd;
    display: flex;
    align-items: center;
    gap: 9px;
}
.report-wrap {
    flex: 1;
    min-height: 0;
    display: flex;
    background: #fff;
    border: 1px solid #666;
    border-bottom: none;
}
.dialog > .hscroll {
    border: 1px solid #666;
    border-top: none;
    padding-right: 11px;
}
.dialog > .hscroll .chev {
    border-color: #aaa;
}
.report {
    position: relative;
    flex: 1;
    min-width: 0;
    padding: 1px;
    font: 9px/11px "Liberation Mono", monospace;
}
.report span {
    white-space: pre;
}
.line {
    display: grid;
    grid-template-columns: 62px 1fr;
}
.block {
    margin: 1px 0 11px;
}
.values {
    display: grid;
    grid-template-columns: 191px 1fr;
    padding-top: 1px;
}
.values mark {
    background: #3393f0;
    color: #fff;
}
.pen {
    position: absolute;
    left: 186px;
    top: 80px;
    width: 130px;
    height: 30px;
}
.vscroll {
    flex: none;
    width: 12px;
    background: #efefef;
    display: flex;
    flex-direction: column;
    align-items: center;
}
.vscroll .chev {
    margin: 5px 0 4px;
}
.vscroll .thumb {
    flex: 1;
    width: 10px;
    background: #cdcdcd;
}
.taskbar {
    flex: none;
    height: 15px;
    background: linear-gradient(#4d4d4d, #3a3a3a);
    border-bottom: 2px solid #111;
}
```
